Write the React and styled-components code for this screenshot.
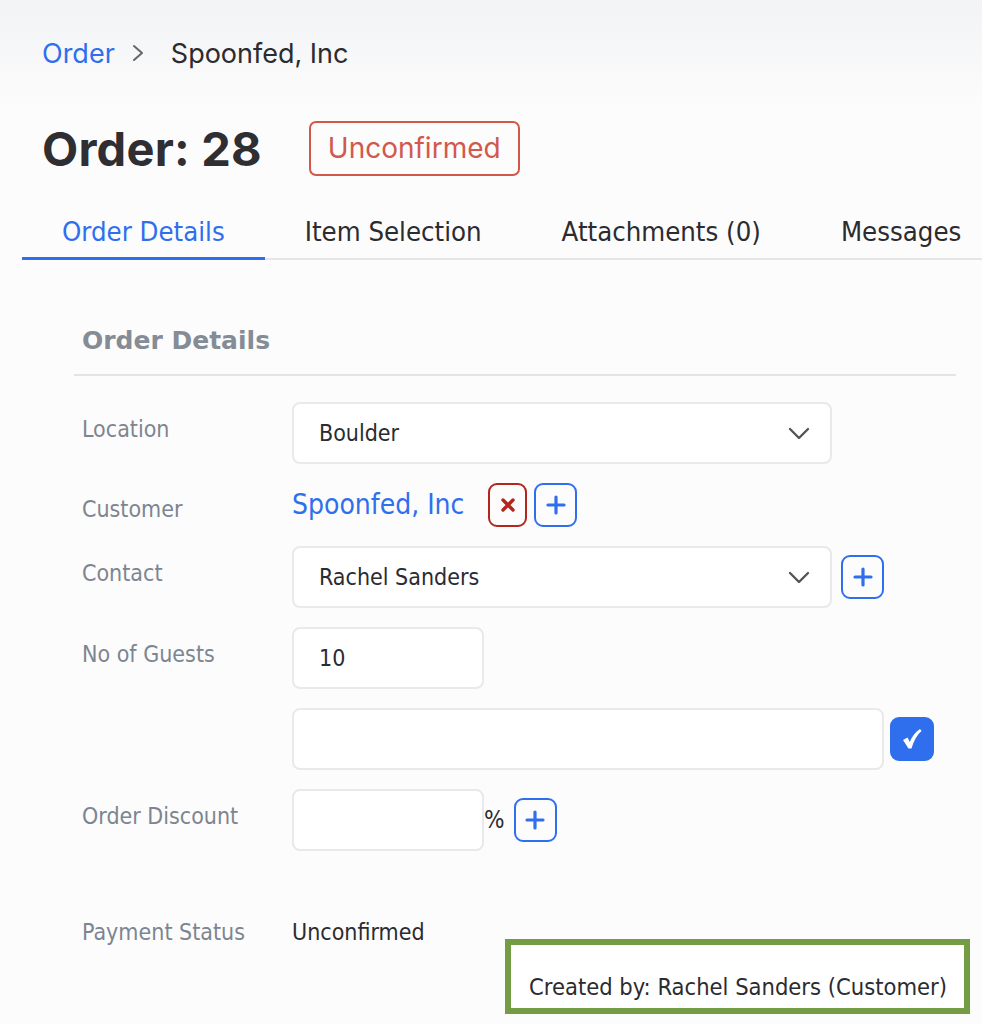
import React from "react";
import styled, { createGlobalStyle } from "styled-components";

const GlobalStyle = createGlobalStyle`
  html, body {
    margin: 0;
    padding: 0;
    background: #fcfcfc;
  }
  body {
    font-family: "DejaVu Sans Condensed", "DejaVu Sans", sans-serif;
    color: #2b2b30;
    overflow: hidden;
  }
`;

const Page = styled.div`
  width: 982px;
  height: 1024px;
  overflow: hidden;
  background: linear-gradient(#f2f3f5 0px, #fcfcfc 110px, #fcfcfc 100%);
`;

const Header = styled.div`
  padding: 28px 0 0 42px;
`;

const Crumbs = styled.div`
  display: flex;
  align-items: center;
  height: 50px;
  font-family: Inter, "Liberation Sans", sans-serif;
  font-size: 27px;
  color: #2b2b30;
`;

const CrumbLink = styled.span`
  color: #2f6fed;
`;

const CrumbSep = styled.span`
  display: flex;
  color: #666;
  margin: 0 26px 0 16px;
`;

const TitleRow = styled.div`
  display: flex;
  align-items: center;
  margin-top: 43px;
  height: 54px;
`;

const Title = styled.h1`
  margin: 0;
  font-family: Inter, "Liberation Sans", sans-serif;
  font-size: 47px;
  font-weight: 700;
  color: #2f2e33;
  letter-spacing: 0.2px;
`;

const Badge = styled.div`
  margin-left: 47px;
  box-sizing: border-box;
  height: 55px;
  padding: 0 17px;
  display: flex;
  align-items: center;
  border: 2px solid #d2584b;
  border-radius: 7px;
  color: #d2584b;
  font-family: Inter, "Liberation Sans", sans-serif;
  font-size: 28px;
`;

const Tabs = styled.div`
  display: flex;
  margin: 27px 0 0 22px;
  border-bottom: 2px solid #e6e6e6;
`;

const Tab = styled.div`
  padding: 0 40px 0;
  height: 58px;
  display: flex;
  align-items: center;
  font-size: 27.3px;
  white-space: nowrap;
  color: ${(p) => (p.$active ? "#2f6fed" : "#2b2b30")};
  box-shadow: ${(p) => (p.$active ? "inset 0 -3px 0 #2f6fed" : "none")};
  margin-bottom: -2px;
`;

const Section = styled.section`
  margin: 66px 26px 0 74px;
`;

const SectionTitle = styled.h2`
  margin: 0;
  padding: 0 0 19px 8px;
  font-family: "DejaVu Sans", sans-serif;
  font-size: 25px;
  font-weight: 700;
  color: #858c95;
  border-bottom: 2px solid #e4e4e4;
`;

const Form = styled.div`
  display: grid;
  grid-template-columns: 210px 1fr;
  row-gap: 19px;
  padding: 26px 0 0 8px;
`;

const Label = styled.div`
  font-size: 23px;
  color: #7c8591;
  padding-top: ${(p) => p.$top ?? 14}px;
`;

const Field = styled.div`
  display: flex;
  align-items: center;
  gap: ${(p) => p.$gap ?? 8}px;
`;

const Box = styled.div`
  box-sizing: border-box;
  width: ${(p) => p.$w}px;
  height: 62px;
  display: flex;
  align-items: center;
  justify-content: space-between;
  padding: 0 20px 0 25px;
  background: #fff;
  border: 2px solid #e9e9e9;
  border-radius: 8px;
  font-size: 23px;
  color: #2b2b30;
`;

const IconButton = styled.div`
  box-sizing: border-box;
  width: ${(p) => p.$w || 43}px;
  height: 44px;
  display: flex;
  align-items: center;
  justify-content: center;
  border-radius: 9px;
  border: 2px solid ${(p) => p.$color};
  background: ${(p) => (p.$filled ? p.$color : "transparent")};
  color: ${(p) => (p.$filled ? "#fff" : p.$color)};
  margin-left: ${(p) => p.$ml || 0}px;
`;

const CustomerLink = styled.span`
  color: #2f6fed;
  font-size: 28px;
  margin-right: 17px;
  line-height: 40px;
`;

const Percent = styled.span`
  font-size: 24px;
  margin: 0 9px 0 0;
`;

const Value = styled.div`
  font-size: 23px;
  color: #2b2b30;
  padding-top: ${(p) => p.$top || 0}px;
`;

const NoteRow = styled.div`
  display: flex;
  justify-content: flex-end;
  margin: -6px 12px 0 0;
`;

const Note = styled.div`
  box-sizing: border-box;
  width: 465px;
  height: 75px;
  border: 6px solid #739c45;
  background: #fff;
  padding: 28px 0 0 18px;
  font-size: 23.5px;
  line-height: 28px;
  color: #2b2b30;
  white-space: nowrap;
`;

const NextTitle = styled.h2`
  margin: 8px 0 0 82px;
  font-family: "DejaVu Sans", sans-serif;
  font-size: 25px;
  font-weight: 700;
  color: #858c95;
`;

const Arrow = () => (
  <svg width="14" height="18" viewBox="0 0 14 18">
    <path d="M3 2l8 7-8 7" fill="none" stroke="currentColor" strokeWidth="2" strokeLinecap="round" strokeLinejoin="round" />
  </svg>
);

const Chevron = () => (
  <svg width="22" height="13" viewBox="0 0 22 13" style={{ color: "#555" }}>
    <path d="M2 2l9 9 9-9" fill="none" stroke="currentColor" strokeWidth="2.4" strokeLinecap="round" strokeLinejoin="round" />
  </svg>
);

const Plus = () => (
  <svg width="20" height="20" viewBox="0 0 20 20">
    <path d="M10 2v16M2 10h16" stroke="currentColor" strokeWidth="3.2" strokeLinecap="round" />
  </svg>
);

const Cross = () => (
  <svg width="16" height="16" viewBox="0 0 16 16">
    <path d="M3 3l10 10M13 3L3 13" stroke="currentColor" strokeWidth="3.4" strokeLinecap="round" />
  </svg>
);

const Check = () => (
  <svg width="20" height="22" viewBox="0 0 20 22">
    <path
      d="M1 12 L5.5 9.5 L7.8 14 C10 8.5 13.5 4 18 1 L19.5 3 C15 7 11.5 13 9.5 20.5 L6.5 20.5 Z"
      fill="currentColor"
    />
  </svg>
);

const App = () => (
  <Page>
    <GlobalStyle />
    <Header>
      <Crumbs>
        <CrumbLink>Order</CrumbLink>
        <CrumbSep>
          <Arrow />
        </CrumbSep>
        <span>Spoonfed, Inc</span>
      </Crumbs>
      <TitleRow>
        <Title>Order: 28</Title>
        <Badge>Unconfirmed</Badge>
      </TitleRow>
    </Header>

    <Tabs>
      <Tab $active>Order Details</Tab>
      <Tab>Item Selection</Tab>
      <Tab>Attachments (0)</Tab>
      <Tab>Messages</Tab>
    </Tabs>

    <Section>
      <SectionTitle>Order Details</SectionTitle>
      <Form>
        <Label>Location</Label>
        <Field>
          <Box $w={540}>
            Boulder
            <Chevron />
          </Box>
        </Field>

        <Label $top={13}>Customer</Label>
        <Field $gap={7}>
          <CustomerLink>Spoonfed, Inc</CustomerLink>
          <IconButton $color="#b3261e" $w={39}>
            <Cross />
          </IconButton>
          <IconButton $color="#2f6fed">
            <Plus />
          </IconButton>
        </Field>

        <Label>Contact</Label>
        <Field>
          <Box $w={540}>
            Rachel Sanders
            <Chevron />
          </Box>
          <IconButton $color="#2f6fed" $ml={1}>
            <Plus />
          </IconButton>
        </Field>

        <Label>No of Guests</Label>
        <Field>
          <Box $w={192}>10</Box>
        </Field>

        <div />
        <Field $gap={6}>
          <Box $w={592} />
          <IconButton $color="#2f6fed" $filled $w={44}>
            <Check />
          </IconButton>
        </Field>

        <Label>Order Discount</Label>
        <Field $gap={0}>
          <Box $w={192} />
          <Percent>%</Percent>
          <IconButton $color="#2f6fed">
            <Plus />
          </IconButton>
        </Field>

        <Label $top={49}>Payment Status</Label>
        <Value $top={49}>Unconfirmed</Value>
      </Form>
    </Section>

    <NoteRow>
      <Note>Created by: Rachel Sanders (Customer)</Note>
    </NoteRow>
    <NextTitle>Event Details</NextTitle>
  </Page>
);

export default App;
